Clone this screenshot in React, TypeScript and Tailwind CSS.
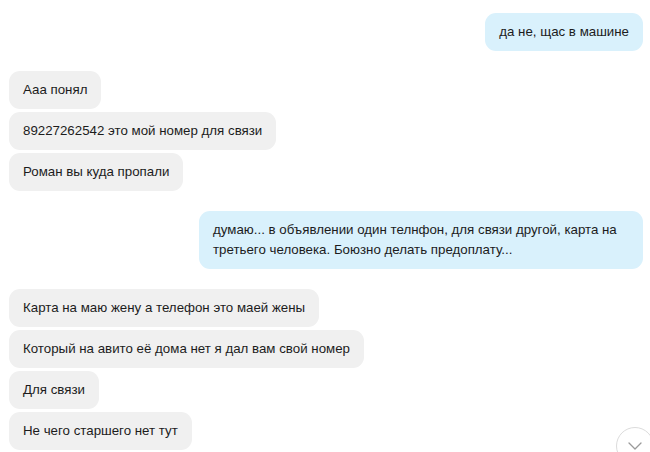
import { ChevronDown } from "lucide-react";

type Msg = { text: string; mine?: boolean };

const groups: Msg[][] = [
  [{ text: "да не, щас в машине", mine: true }],
  [
    { text: "Ааа понял" },
    { text: "89227262542 это мой номер для связи" },
    { text: "Роман вы куда пропали" },
  ],
  [
    {
      text: "думаю... в объявлении один телнфон, для связи другой, карта на третьего человека. Боюзно делать предоплату...",
      mine: true,
    },
  ],
  [
    { text: "Карта на маю жену а телефон это маей жены" },
    { text: "Который на авито её дома нет я дал вам свой номер" },
    { text: "Для связи" },
    { text: "Не чего старшего нет тут" },
  ],
];

function Bubble({ text, mine }: Msg) {
  return (
    <div
      className={
        mine
          ? "max-w-[444px] self-end rounded-[11px] bg-[#d9f1fc] px-[14px] py-[9px] text-[13.3px] leading-[20px] text-[#1c1c1c]"
          : "max-w-[444px] self-start rounded-[11px] bg-[#f0f0f0] px-[14px] py-[9px] text-[13.3px] leading-[20px] text-[#1c1c1c]"
      }
    >
      {text}
    </div>
  );
}

export default function App() {
  return (
    <div
      className="relative h-[452px] w-[650px] overflow-hidden bg-white"
      style={{ fontFamily: '"Liberation Sans", Arial, sans-serif' }}
    >
      <div className="flex flex-col gap-5 pl-[9px] pr-[7px] pt-[13px]">
        {groups.map((g, i) => (
          <div key={i} className="flex flex-col gap-[3px]">
            {g.map((m, j) => (
              <Bubble key={j} {...m} />
            ))}
          </div>
        ))}
      </div>
      <div className="absolute left-[616px] top-[427px] flex h-[38px] w-[38px] items-center justify-center rounded-full border border-[#dcdcdc] bg-white">
        <ChevronDown className="h-6 w-6 text-[#9a9a9a]" strokeWidth={1.3} />
      </div>
    </div>
  );
}
